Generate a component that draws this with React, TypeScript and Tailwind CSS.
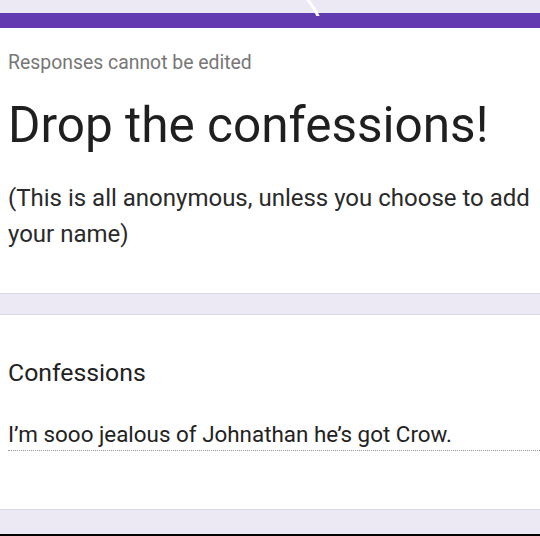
import React from 'react';

const App: React.FC = () => {
  return (
    <div className="h-[536px] w-[540px] overflow-hidden bg-[#ece9f5] flex flex-col" style={{ fontFamily: 'Roboto, "Noto Sans", sans-serif' }}>
      {/* top strip with a small white streak */}
      <div className="relative h-[13px] shrink-0">
        <svg className="absolute left-[306px] top-0" width="14" height="16" viewBox="0 0 14 16">
          <path d="M2 0 L9 10 L12 16" stroke="#ffffff" strokeWidth="3" fill="none" strokeLinecap="round" />
        </svg>
      </div>

      {/* header card */}
      <div className="h-[281px] shrink-0 bg-white border-t-[15px] border-[#623bb0] border-b border-b-[#dcd9e4] px-2 pt-[23px]">
        <div className="text-[19.4px] leading-[24px] text-[#777777]">Responses cannot be edited</div>
        <h1 className="mt-[22px] text-[49.5px] leading-[56px] text-[#1f1f1f]">Drop the confessions!</h1>
        <p className="mt-[27px] text-[24px] leading-[36px] text-[#2a2a2a]">
          (This is all anonymous, unless you choose to add your name)
        </p>
      </div>

      <div className="h-[20px] shrink-0" />

      {/* question card */}
      <div className="h-[196px] shrink-0 bg-white border-t border-b border-[#dcd9e4] pl-2 pt-[43px]">
        <div className="text-[24.8px] leading-[30px] text-[#222222]">Confessions</div>
        <div className="mt-[32px] pb-[2px] border-b border-dotted border-[#9a9a9a] text-[22.4px] leading-[28px] text-[#222222]">
          I’m sooo jealous of Johnathan he’s got Crow.
        </div>
      </div>

      <div className="flex-1" />
      <div className="h-[2px] shrink-0 bg-black" />
    </div>
  );
};

export default App;
